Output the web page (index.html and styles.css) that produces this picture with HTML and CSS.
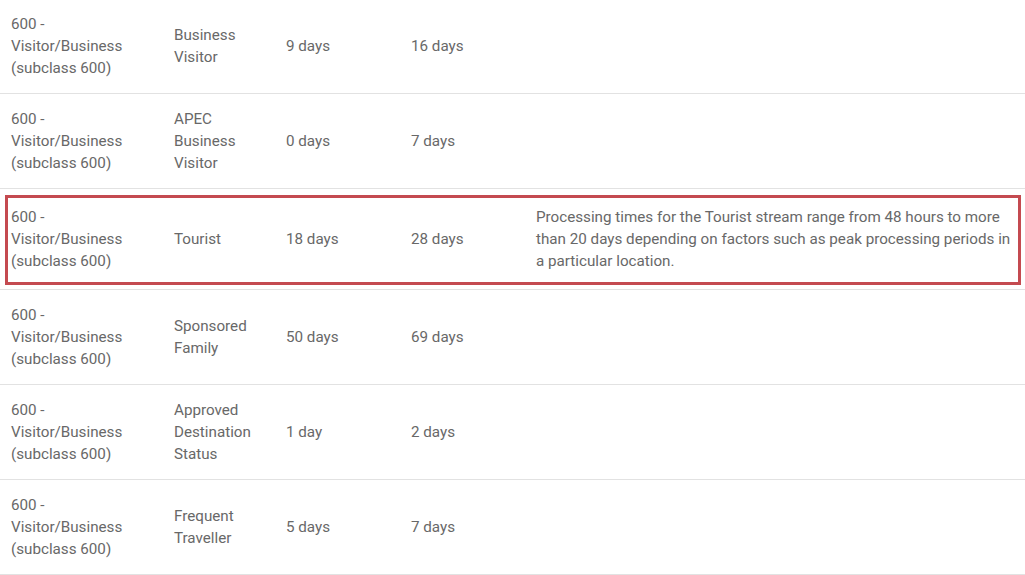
FILE: index.html
```html
<!DOCTYPE html>
<html>
<head>
<meta charset="utf-8">
<link rel="stylesheet" href="styles.css">
</head>
<body>
<div class="table">
  <div class="row">
    <div class="cell">600 - Visitor/Business (subclass 600)</div>
    <div class="cell">Business Visitor</div>
    <div class="cell">9 days</div>
    <div class="cell">16 days</div>
    <div class="cell"></div>
  </div>
  <div class="row">
    <div class="cell">600 - Visitor/Business (subclass 600)</div>
    <div class="cell">APEC Business Visitor</div>
    <div class="cell">0 days</div>
    <div class="cell">7 days</div>
    <div class="cell"></div>
  </div>
  <div class="row highlight">
    <div class="cell">600 - Visitor/Business (subclass 600)</div>
    <div class="cell">Tourist</div>
    <div class="cell">18 days</div>
    <div class="cell">28 days</div>
    <div class="cell">Processing times for the Tourist stream range from 48 hours to more than 20 days depending on factors such as peak processing periods in a particular location.</div>
  </div>
  <div class="row">
    <div class="cell">600 - Visitor/Business (subclass 600)</div>
    <div class="cell">Sponsored Family</div>
    <div class="cell">50 days</div>
    <div class="cell">69 days</div>
    <div class="cell"></div>
  </div>
  <div class="row">
    <div class="cell">600 - Visitor/Business (subclass 600)</div>
    <div class="cell">Approved Destination Status</div>
    <div class="cell">1 day</div>
    <div class="cell">2 days</div>
    <div class="cell"></div>
  </div>
  <div class="row">
    <div class="cell">600 - Visitor/Business (subclass 600)</div>
    <div class="cell">Frequent Traveller</div>
    <div class="cell">5 days</div>
    <div class="cell">7 days</div>
    <div class="cell"></div>
  </div>
</div>
</body>
</html>
```
FILE: styles.css
```css
html, body {
  margin: 0;
  padding: 0;
  background: #ffffff;
}
body {
  font-family: Roboto, "Liberation Sans", sans-serif;
  font-size: 15.2px;
  line-height: 22px;
  color: #686868;
  overflow: hidden;
}
.table {
  margin-top: -1px;
  display: flex;
  flex-direction: column;
}
.row {
  display: grid;
  grid-template-columns: 163px 112px 125px 125px 1fr;
  align-items: center;
  border-bottom: 1px solid #e2e2e2;
  min-height: 94px;
}
.cell {
  padding: 0 11px;
}
.row.highlight {
  position: relative;
  min-height: 100px;
}
.row.highlight::after {
  content: "";
  position: absolute;
  left: 5px;
  top: 6px;
  right: 4px;
  bottom: 4px;
  border: 3px solid #c44a50;
  pointer-events: none;
}
```
